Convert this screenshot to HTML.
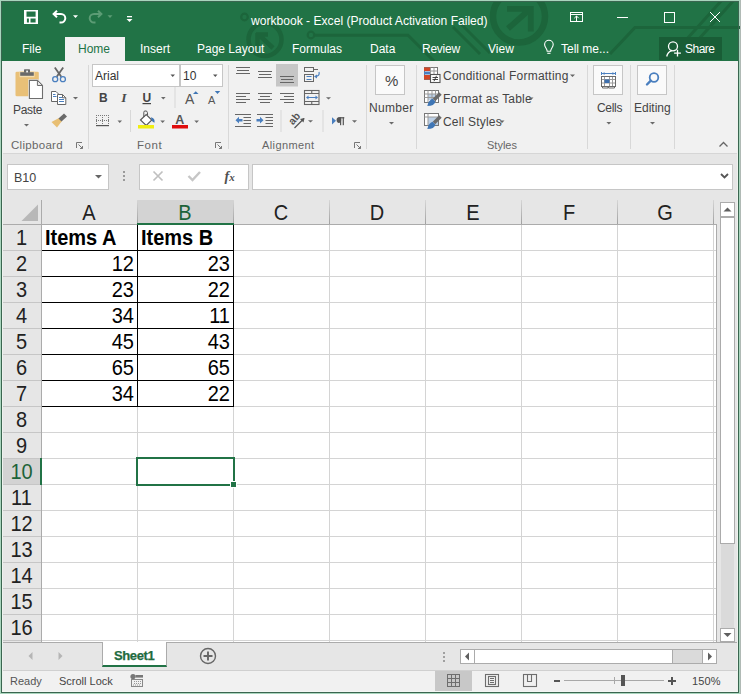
<!DOCTYPE html>
<html><head><meta charset="utf-8">
<style>
*{margin:0;padding:0;box-sizing:border-box}
html,body{width:741px;height:694px;overflow:hidden;background:#a9d5bd;font-family:"Liberation Sans",sans-serif}
.a{position:absolute}
.t{position:absolute;white-space:nowrap;line-height:1}
#title{left:1px;top:1px;width:738px;height:60px;background:#217346}
.tab{color:#fff;font-size:12px;top:43px}
#ribbon{left:2px;top:61px;width:736px;height:93px;background:#f1f1f1;border-bottom:1px solid #d6d6d6}
.sep{position:absolute;top:65px;width:1px;height:84px;background:#d8d8d8}
.glab{color:#666;font-size:11px;top:140px}
.rt{color:#444;font-size:12px}
#grid{left:2px;top:198px}
.ch{position:absolute;top:200px;height:24px;font-size:18px;color:#222;text-align:center;line-height:26px}
.rh{position:absolute;left:2px;width:39px;height:26px;font-size:18px;color:#222;text-align:center;line-height:28px}
.cell{position:absolute;font-size:18px;color:#000;line-height:28px;height:26px}
.big{transform:scaleY(1.07);transform-origin:0 17px}
</style></head><body>
<!-- title bar -->
<div class="a" id="title"></div>
<svg class="a" style="left:0;top:1px" width="740" height="60">
  <g transform="translate(0,-1)" stroke="#1c653b" fill="none" stroke-width="3">
    <circle cx="244.5" cy="17" r="3.3" stroke-width="2.2"/>
    <circle cx="265" cy="39.5" r="16.5" stroke-width="4.5"/>
    <path d="M273 48 L258 34 M256 34.5 H268 M257.5 33 V46" stroke-width="4.5"/>
    <circle cx="311" cy="35" r="3.3" stroke-width="2.2"/>
    <path d="M314.5 35.3 H408 L434 61" stroke-width="3"/>
    <path d="M453 27 L480 54 M461 24 L490 53" stroke-width="3"/>
    <circle cx="519" cy="16.5" r="26" stroke-width="6.5"/>
    <path d="M508 28.5 L529 10 M507 8.8 H530.8 V31.4" stroke-width="5.8"/>
    <path d="M610 54 L635 27.5 H741" stroke-width="3"/>
    <path d="M686 40 L722 0 M698 40 L734 0" stroke-width="3"/>
  </g>
</svg>
<div class="a" style="left:740px;top:0;width:1px;height:694px;background:#b0bab5"></div>
<!-- QAT -->
<svg class="a" style="left:0;top:0" width="140" height="33">
  <path fill="#fff" fill-rule="evenodd" d="M24 10 H38 V24 H24 Z M26.5 11.6 V16.7 H35.6 V11.6 Z M26.9 18.4 V22.6 H28.9 V18.4 Z M30.5 18.4 V22.6 H35.6 V18.4 Z"/>
  <g fill="none" stroke="#fff" stroke-width="2">
    <path d="M54 14 H61 A4.3 4.3 0 0 1 61 22.6 H59.5"/>
    <path d="M57 10.7 L53.6 14 L57 17.3"/>
  </g>
  <path d="M73 15.2 H78 L75.5 18 Z" fill="#fff"/>
  <g fill="none" stroke="#5c9c75" stroke-width="2">
    <path d="M101 14 H94 A4.3 4.3 0 0 0 94 22.6 H95.5"/>
    <path d="M98 10.7 L101.4 14 L98 17.3"/>
  </g>
  <path d="M107.5 15.2 H112.5 L110 18 Z" fill="#5c9c75"/>
  <rect x="127" y="16" width="5" height="1.3" fill="#fff"/>
  <path d="M126.5 19 H132.5 L129.5 22 Z" fill="#fff"/>
</svg>
<div class="t" style="left:251px;top:15px;font-size:12.1px;color:#fff">workbook - Excel (Product Activation Failed)</div>
<!-- window controls -->
<svg class="a" style="left:560px;top:0" width="181" height="33">
  <g fill="none" stroke="#fff" stroke-width="1">
    <rect x="10.5" y="12.5" width="12" height="9"/>
    <path d="M10.5 14.5 H22.5"/>
    <path d="M16.5 21.5 V16 M14.3 18.2 L16.5 16 L18.7 18.2"/>
    <path d="M57 17.5 H68"/>
    <rect x="104.5" y="12.5" width="10" height="10"/>
    <path d="M150 12 L160 22 M160 12 L150 22"/>
  </g>
</svg>
<!-- tabs -->
<div class="t tab" style="left:22px">File</div>
<div class="a" style="left:65px;top:37px;width:60px;height:24px;background:#f1f1f1"></div>
<div class="t tab" style="left:78px;color:#217346">Home</div>
<div class="t tab" style="left:140px">Insert</div>
<div class="t tab" style="left:197px">Page Layout</div>
<div class="t tab" style="left:292px">Formulas</div>
<div class="t tab" style="left:370px">Data</div>
<div class="t tab" style="left:422px;letter-spacing:-0.25px">Review</div>
<div class="t tab" style="left:488px">View</div>
<svg class="a" style="left:540px;top:38px" width="20" height="20">
  <g fill="none" stroke="#fff" stroke-width="1.1">
    <path d="M7.2 13.3 C7.2 10.6 4.6 9.4 4.6 6.6 A4.3 4.3 0 0 1 13.2 6.6 C13.2 9.4 10.6 10.6 10.6 13.3 Z"/>
    <path d="M7.3 15.3 H10.5"/>
  </g>
</svg>
<div class="t tab" style="left:561px">Tell me...</div>
<div class="a" style="left:659px;top:37px;width:63px;height:23px;background:#195d36"></div>
<svg class="a" style="left:664px;top:38px" width="20" height="22">
  <g fill="none" stroke="#fff" stroke-width="1.3">
    <circle cx="9" cy="8.3" r="4.5"/>
    <path d="M2.7 18.5 Q3.8 13.8 7.6 12.9"/>
    <path d="M13.5 11.8 V18.6 M10.1 15.2 H16.9"/>
  </g>
</svg>
<div class="t tab" style="left:685px;letter-spacing:-0.5px">Share</div>

<!-- window border -->
<div class="a" style="left:2px;top:61px;width:736px;height:631px;background:#e6e6e6"></div>

<!-- ribbon -->
<div class="a" id="ribbon"></div>
<div class="sep" style="left:88px"></div>
<div class="sep" style="left:228px"></div>
<div class="sep" style="left:366px"></div>
<div class="sep" style="left:416px"></div>
<div class="sep" style="left:587px"></div>
<div class="sep" style="left:630px"></div>
<div class="sep" style="left:674px"></div>
<div class="t glab" style="left:11px;font-size:11.5px;letter-spacing:0.3px">Clipboard</div>
<div class="t glab" style="left:137px;font-size:11.5px;letter-spacing:0.6px">Font</div>
<div class="t glab" style="left:262px;letter-spacing:0.4px">Alignment</div>
<div class="t glab" style="left:487px">Styles</div>

<div class="t rt" style="left:13px;top:104px;letter-spacing:-0.3px">Paste</div>
<div class="a" style="left:92px;top:64px;width:88px;height:23px;background:#fff;border:1px solid #c6c6c6"></div>
<div class="t" style="left:95px;top:70px;font-size:12px;color:#333">Arial</div>
<div class="a" style="left:180px;top:64px;width:43px;height:23px;background:#fff;border:1px solid #c6c6c6"></div>
<div class="t" style="left:183px;top:70px;font-size:12px;color:#333">10</div>
<div class="a" style="left:375px;top:65px;width:30px;height:30px;background:#fafafa;border:1px solid #c6c6c6"></div>
<div class="t" style="left:385px;top:73px;font-size:15px;color:#444">%</div>
<div class="t rt" style="left:369px;top:102px;letter-spacing:0.3px">Number</div>
<div class="t rt" style="left:443px;top:70px;letter-spacing:0.22px">Conditional Formatting</div>
<div class="t rt" style="left:443px;top:93px;letter-spacing:0.2px">Format as Table</div>
<div class="t rt" style="left:443px;top:116px;letter-spacing:0.2px">Cell Styles</div>
<div class="a" style="left:593px;top:65px;width:30px;height:30px;background:#fafafa;border:1px solid #c6c6c6"></div>
<div class="t rt" style="left:597px;top:102px;letter-spacing:-0.3px">Cells</div>
<div class="a" style="left:637px;top:65px;width:30px;height:30px;background:#fafafa;border:1px solid #c6c6c6"></div>
<div class="t rt" style="left:634px;top:102px">Editing</div>

<!-- formula bar -->
<div class="a" style="left:7px;top:164px;width:102px;height:26px;background:#fff;border:1px solid #c6c6c6"></div>
<div class="t" style="left:14px;top:172px;font-size:12.5px;color:#444">B10</div>
<div class="a" style="left:139px;top:164px;width:110px;height:26px;background:#fff;border:1px solid #c6c6c6"></div>
<div class="a" style="left:252px;top:164px;width:481px;height:26px;background:#fff;border:1px solid #c6c6c6"></div>

<!-- grid -->
<div class="a" style="left:2px;top:200px;width:714px;height:442px;background:#fff"></div>
<div class="a" style="left:2px;top:200px;width:714px;height:24px;background:#e6e6e6"></div>
<div class="a" style="left:2px;top:200px;width:39px;height:442px;background:#e6e6e6"></div>
<div class="a" style="left:137px;top:200px;width:96px;height:24px;background:#d3d3d3"></div>


<!-- vertical scrollbar -->
<div class="a" style="left:717px;top:198px;width:21px;height:444px;background:#e6e6e6"></div>
<div class="a" style="left:720px;top:202px;width:15px;height:15px;background:#fff;border:1px solid #ababab"></div>
<svg class="a" style="left:720px;top:202px" width="15" height="15"><path d="M3.5 9.5 H11.5 L7.5 5.5 Z" fill="#5f5f5f"/></svg>
<div class="a" style="left:720px;top:217px;width:15px;height:327px;background:#fff;border:1px solid #ababab"></div>
<div class="a" style="left:721px;top:544px;width:13px;height:84px;background:#dadada"></div>
<div class="a" style="left:720px;top:628px;width:15px;height:14px;background:#fff;border:1px solid #ababab"></div>
<svg class="a" style="left:720px;top:628px" width="15" height="14"><path d="M3.5 5 H11.5 L7.5 9 Z" fill="#5f5f5f"/></svg>
<!-- sheet tab bar -->
<div class="a" style="left:2px;top:642px;width:736px;height:29px;background:#e6e6e6;border-top:1px solid #ababab;border-bottom:1px solid #d0d0d0"></div>
<svg class="a" style="left:18px;top:648px" width="50" height="16"><path d="M14.5 4 V12 L10.5 8 Z M40.5 4 V12 L44.5 8 Z" fill="#b5b5b5"/></svg>
<div class="a" style="left:102px;top:642px;width:65px;height:25px;background:#fff;border-left:1px solid #ababab;border-right:1px solid #ababab;border-bottom:2px solid #217346"></div>
<div class="t" style="left:114px;top:649px;font-size:13px;font-weight:bold;color:#1f6b40;letter-spacing:-0.4px;-webkit-text-stroke:0.25px #1f6b40">Sheet1</div>
<svg class="a" style="left:198px;top:646px" width="20" height="20"><g fill="none" stroke="#666" stroke-width="1.4"><circle cx="10" cy="10" r="7.5"/><path d="M10 5.5 V14.5 M5.5 10 H14.5" stroke-width="1.9"/></g></svg>
<svg class="a" style="left:440px;top:650px" width="8" height="14"><g fill="#a0a0a0"><rect x="3" y="2" width="2" height="2"/><rect x="3" y="6" width="2" height="2"/><rect x="3" y="10" width="2" height="2"/></g></svg>
<div class="a" style="left:460px;top:649px;width:257px;height:15px;background:#dadada;border:1px solid #ababab"></div>
<div class="a" style="left:460px;top:649px;width:15px;height:15px;background:#fff;border:1px solid #ababab"></div>
<svg class="a" style="left:460px;top:649px" width="15" height="15"><path d="M5 7.5 L9 3.5 V11.5 Z" fill="#5f5f5f"/></svg>
<div class="a" style="left:474px;top:649px;width:199px;height:15px;background:#fff;border:1px solid #ababab"></div>
<div class="a" style="left:702px;top:649px;width:15px;height:15px;background:#fff;border:1px solid #ababab"></div>
<svg class="a" style="left:702px;top:649px" width="15" height="15"><path d="M10 7.5 L6 3.5 V11.5 Z" fill="#5f5f5f"/></svg>
<!-- status bar -->
<div class="a" style="left:2px;top:671px;width:736px;height:21px;background:#f1f1f1"></div>
<div class="t" style="left:10px;top:676px;font-size:11px;color:#555">Ready</div>
<div class="t" style="left:59px;top:676px;font-size:11px;color:#444">Scroll Lock</div>
<svg class="a" style="left:128px;top:672px" width="18" height="18">
 <circle cx="5" cy="4.5" r="2.6" fill="#777"/>
 <rect x="7.5" y="3" width="7.5" height="2.6" fill="#777"/>
 <g fill="#888"><rect x="3" y="7" width="12" height="1"/><rect x="3" y="14" width="12" height="1"/>
 <rect x="3" y="7" width="1" height="8"/><rect x="14" y="7" width="1" height="8"/></g>
 <g fill="#999"><rect x="6" y="9" width="1" height="1"/><rect x="8" y="9" width="1" height="1"/><rect x="10" y="9" width="1" height="1"/><rect x="12" y="9" width="1" height="1"/>
 <rect x="6" y="11" width="1" height="1"/><rect x="8" y="11" width="1" height="1"/><rect x="10" y="11" width="1" height="1"/><rect x="12" y="11" width="1" height="1"/>
 <rect x="5" y="12.5" width="1" height="1"/><rect x="7" y="12.5" width="1" height="1"/><rect x="9" y="12.5" width="1" height="1"/><rect x="11" y="12.5" width="1" height="1"/></g>
</svg>
<div class="a" style="left:435px;top:671px;width:37px;height:21px;background:#c8c8c8"></div>
<svg class="a" style="left:0;top:0" width="741" height="694">
 <g fill="none" stroke="#6e6e6e" stroke-width="1">
  <rect x="447.5" y="674.5" width="12" height="12"/>
  <path d="M451.5 674.5 V686.5 M455.5 674.5 V686.5 M447.5 678.5 H459.5 M447.5 682.5 H459.5"/>
 </g>
 <g fill="none" stroke="#6e6e6e" stroke-width="1.1">
  <rect x="485.5" y="674.5" width="13" height="12"/>
  <rect x="488.5" y="676.5" width="7" height="8"/>
  <path d="M490 678.5 H494 M490 680.5 H494 M490 682.5 H494"/>
  <rect x="523.5" y="674.5" width="13" height="12"/>
  <path d="M527.5 674.5 V681.5 H531.5 V674.5"/>
 </g>
</svg>
<div class="a" style="left:554px;top:680px;width:6px;height:2px;background:#555"></div>
<div class="a" style="left:564px;top:680px;width:100px;height:1px;background:#a8a8a8"></div>
<div class="a" style="left:614px;top:677px;width:1px;height:7px;background:#a8a8a8"></div>
<div class="a" style="left:621px;top:675px;width:4px;height:11px;background:#555"></div>
<svg class="a" style="left:666px;top:675px" width="12" height="12"><path d="M6 2 V10 M2 6 H10" stroke="#555" stroke-width="2"/></svg>
<div class="t" style="left:692px;top:676px;font-size:11px;color:#444;letter-spacing:0.1px">150%</div>

<!--RIBBONSVG-->
<svg class="a" style="left:0;top:0" width="741" height="200">
 <!-- paste -->
 <path d="M15.5 73 Q15.5 71.7 16.8 71.7 H37.5 Q38.8 71.7 38.8 73 V95 Q38.8 96.3 37.5 96.3 H16.8 Q15.5 96.3 15.5 95 Z" fill="#e9c077"/>
 <rect x="19.5" y="71.2" width="15" height="6" fill="#f5deb0"/>
 <path d="M20.2 72.2 H33.8 V75.8 H20.2 Z" fill="#6a6a6a"/>
 <path d="M24 72.5 V69.8 Q24 69.2 24.6 69.2 H29.4 Q30 69.2 30 69.8 V72.5 Z" fill="#6a6a6a"/>
 <rect x="26.2" y="70.6" width="1.8" height="1.8" fill="#f1f1f1"/>
 <path d="M28.3 79.3 H38 L43.6 84.9 V99.4 H28.3 Z" fill="#f4f4f4"/>
 <path d="M29.4 80.4 H37.4 L42.5 85.5 V98.5 H29.4 Z" fill="#fff" stroke="#6e6e6e" stroke-width="1.1"/>
 <path d="M37.4 80.4 V85.5 H42.5 Z" fill="#e6e6e6" stroke="#6e6e6e" stroke-width="1"/>
 <path d="M24 124 H29 L26.5 126.5 Z" fill="#6a6a6a"/>
 <!-- scissors -->
 <path d="M54.8 67.5 L61.3 76.8 M63.2 67.5 L56.7 76.8" stroke="#666" stroke-width="1.8" fill="none"/>
 <g fill="none" stroke="#4a7fbf" stroke-width="1.3">
  <circle cx="55.2" cy="79.2" r="2.5"/>
  <circle cx="62.9" cy="79.2" r="2.5"/>
 </g>
 <!-- copy -->
 <path d="M51.5 91.5 H56 L58.5 94 V101.5 H51.5 Z" fill="#fff" stroke="#666" stroke-width="1"/>
 <path d="M57.5 94.5 H62.5 L65.8 97.8 V104.5 H57.5 Z" fill="#fff" stroke="#666" stroke-width="1"/>
 <path d="M62.5 94.5 V97.8 H65.8" fill="none" stroke="#666" stroke-width="1"/>
 <g stroke="#4a7fbf" stroke-width="1"><path d="M53 94.5 H55.5 M53 96.5 H56.5 M59 97.5 H62 M59 99.5 H64 M59 101.5 H64"/></g>
 <path d="M73 97 H78 L75.5 99.5 Z" fill="#6a6a6a"/>
 <!-- format painter -->
 <path d="M59 118 L62 121 L57 127.5 L51.5 122 Z" fill="#e8bf74"/>
 <path d="M58.5 118.5 L64 113.5 L67 116.5 L61.5 121.5 Z" fill="#6a6a6a"/>
 <!-- font group -->
 <path d="M170.5 74.5 H175 L172.75 77 Z M213 74.5 H217.5 L215.25 77 Z" fill="#555"/>
 <text x="99" y="102" font-family="Liberation Sans" font-weight="bold" font-size="12" fill="#444">B</text>
 <text x="121.3" y="102.3" font-family="Liberation Serif" font-style="italic" font-weight="bold" font-size="13.5" fill="#4a4a4a">I</text>
 <text x="142.5" y="102" font-family="Liberation Sans" font-weight="bold" font-size="12" fill="#444">U</text>
 <rect x="142.5" y="103" width="8.5" height="1.2" fill="#444"/>
 <path d="M161 97 H165.6 L163.3 99.4 Z" fill="#6a6a6a"/>
 <rect x="174.5" y="87" width="1" height="21" fill="#d8d8d8"/>
 <text x="185" y="104" font-family="Liberation Sans" font-size="14" fill="#555">A</text>
 <path d="M193 94 H198.5 L195.75 91.2 Z" fill="#3f76b5"/>
 <text x="208" y="104" font-family="Liberation Sans" font-size="11" fill="#555">A</text>
 <path d="M214.8 91 H220.2 L217.5 94 Z" fill="#3f76b5"/>
 <!-- borders -->
 <g fill="none" stroke="#7a7a7a" stroke-width="1" stroke-dasharray="1 1">
  <path d="M96 115.5 H109 M96 120.5 H109"/>
  <path d="M96.5 115 V125 M102.5 115 V125 M108.5 115 V125"/>
 </g>
 <rect x="96" y="125" width="13" height="1.2" fill="#555"/>
 <path d="M117.5 120.6 H122 L119.75 123 Z" fill="#6a6a6a"/>
 <rect x="130" y="110" width="1" height="22" fill="#d8d8d8"/>
 <!-- fill color -->
 <path d="M140.5 120 L146.2 114.5 L151.8 120 L146.2 125.5 Z" fill="#fff" stroke="#555" stroke-width="1.1"/>
 <path d="M143.8 117 V112.3 Q143.8 111 145 111 H146 Q147.2 111 147.4 112.5 L147.6 115" fill="none" stroke="#555" stroke-width="1"/>
 <path d="M151 117.2 Q155.2 118 154.5 122.8 Q151.2 121.8 151 117.2 Z" fill="#3f76b5"/>
 <rect x="138" y="125" width="16" height="3.5" fill="#f0ee10"/>
  <path d="M160.3 120.6 H165 L162.65 123 Z" fill="#6a6a6a"/>
 <!-- font color -->
 <text x="175.3" y="124.3" font-family="Liberation Sans" font-weight="bold" font-size="12.5" fill="#555">A</text>
 <rect x="172" y="125" width="16" height="3.5" fill="#e00d0d"/>
 <path d="M194.3 120.6 H199 L196.65 123 Z" fill="#6a6a6a"/>
 <!-- launchers -->
 <g fill="none" stroke="#777" stroke-width="1">
  <path d="M76.5 148 V142.5 H82" /><path d="M78.5 144.5 L82.5 148.5 M80 148.5 H82.5 V146"/>
  <path d="M215.5 148 V142.5 H221" /><path d="M217.5 144.5 L221.5 148.5 M219 148.5 H221.5 V146"/>
  <path d="M354.5 148 V142.5 H360" /><path d="M356.5 144.5 L360.5 148.5 M358 148.5 H360.5 V146"/>
 </g>
 <!-- alignment -->
 <g stroke="#666" stroke-width="1.1" fill="none">
  <path d="M236 67.5 H250 M237 70.5 H249 M236 73.5 H250"/>
  <path d="M258 71.5 H272 M259 74.5 H271 M258 77.5 H272"/>
 </g>
 <rect x="276" y="64" width="22" height="22.5" fill="#c6c6c6"/>
 <g stroke="#666" stroke-width="1.1" fill="none">
  <path d="M280 76.5 H294 M281 79.5 H293 M280 82.5 H294"/>
  <path d="M236 93.5 H250 M236 96.5 H246 M236 99.5 H250 M236 102.5 H246"/>
  <path d="M258 93.5 H272 M260 96.5 H270 M258 99.5 H272 M260 102.5 H270"/>
  <path d="M280 93.5 H294 M284 96.5 H294 M280 99.5 H294 M284 102.5 H294"/>
  <path d="M235 114.5 H251 M243.5 117.5 H251 M243.5 120.5 H251 M243.5 123.5 H251 M235 126.5 H251"/>
  <path d="M257 114.5 H273 M265.5 117.5 H273 M265.5 120.5 H273 M265.5 123.5 H273 M257 126.5 H273"/>
 </g>
 <path d="M235.5 120.2 L239 116.8 V118.9 H242.5 V121.5 H239 V123.6 Z" fill="#4a7fbf"/>
 <path d="M263.5 120.2 L260 116.8 V118.9 H256.5 V121.5 H260 V123.6 Z" fill="#4a7fbf"/>
 <!-- wrap text -->
 <g fill="none" stroke="#666" stroke-width="1">
  <rect x="304.5" y="67.5" width="9" height="4"/>
  <path d="M313.5 69.5 H318"/>
  <rect x="304.5" y="74.5" width="9" height="7"/>
 </g>
 <path d="M306.5 76.5 H311.5 M306.5 79.5 H311.5" stroke="#4a7fbf" stroke-width="1"/>
 <path d="M319 72 Q320 76 315.5 76.5" fill="none" stroke="#4a7fbf" stroke-width="1.2"/>
 <path d="M314 76.5 L317 74.5 V78.5 Z" fill="#4a7fbf"/>
 <!-- merge -->
 <g fill="none" stroke="#666" stroke-width="1.1">
  <rect x="304.5" y="90.5" width="14.5" height="14"/>
  <path d="M304.5 93.5 H319 M304.5 101.5 H319 M311.75 90.5 V93.5 M311.75 101.5 V104.5"/>
 </g>
 <path d="M307 97.5 H317" stroke="#4a7fbf" stroke-width="1"/>
 <path d="M306 97.5 L308.5 95.5 V99.5 Z M318 97.5 L315.5 95.5 V99.5 Z" fill="#4a7fbf"/>
 <path d="M326 97.2 H331 L328.5 99.6 Z" fill="#6a6a6a"/>
 <rect x="280.5" y="110" width="1" height="22" fill="#d8d8d8"/>
 <rect x="322.5" y="110" width="1" height="22" fill="#d8d8d8"/>
 <!-- orientation -->
 <text x="0" y="0" font-family="Liberation Sans" font-weight="bold" font-size="10.5" fill="#555" transform="translate(293 125.5) rotate(-50)">ab</text>
 <path d="M294.5 128 L304 118.5" stroke="#555" stroke-width="1.2"/>
 <path d="M304.5 118 L300 119 L303.5 122.5 Z" fill="#555"/>
 <path d="M308 120.3 H313 L310.5 122.6 Z" fill="#6a6a6a"/>
 <!-- rtl -->
 <path d="M332 117.2 L336 120.8 L332 124.4 Z" fill="#4a7fbf"/>
 <g fill="#555"><ellipse cx="338.9" cy="120.1" rx="2.3" ry="2.8"/><rect x="338.5" y="117.2" width="5.8" height="1.2"/><rect x="340" y="117.2" width="1.2" height="8"/><rect x="342.7" y="117.2" width="1.2" height="8"/></g>
 <path d="M352 120.3 H357 L354.5 122.7 Z" fill="#6a6a6a"/>
 <!-- number -->
 <path d="M389 122 H394 L391.5 124.6 Z" fill="#6a6a6a"/>
 <!-- cond fmt -->
 <g>
  <rect x="424.5" y="67.5" width="13" height="12" fill="#fff" stroke="#777" stroke-width="1"/>
  <rect x="424" y="67.5" width="6.5" height="3.5" fill="#d24726"/>
  <rect x="424" y="71.5" width="6.5" height="3" fill="#4a7fbf"/>
  <rect x="424" y="75" width="6.5" height="4.5" fill="#d24726"/>
  <path d="M430.5 67.5 V74 M434 67.5 V74 M430.5 71 H437.5" stroke="#999" stroke-width="1"/>
  <rect x="430.5" y="74.5" width="9.5" height="8" fill="#fff" stroke="#555" stroke-width="1.1"/>
  <path d="M432.5 77.5 H438 M432.5 79.5 H438 M436.5 75.8 L434 81.2" stroke="#333" stroke-width="0.9"/>
 </g>
 <g>
  <rect x="424.5" y="90.5" width="14" height="12" fill="#fff" stroke="#777" stroke-width="1"/>
  <rect x="428" y="94" width="8" height="6" fill="#bcd0e6"/>
  <path d="M424.5 94 H438.5 M424.5 97.5 H438.5 M428 90.5 V102.5 M432 90.5 V102.5 M435.5 90.5 V102.5" stroke="#999" stroke-width="1"/>
  <path d="M439.2 92.3 L441.7 94.8 L435.2 101.3 L432.7 98.8 Z" fill="#6a6a6a"/>
  <path d="M432.5 98.8 L435.3 101.5 Q434.5 106 427.3 106 Q428.5 100 432.5 98.8 Z" fill="#3f76b5"/>
 </g>
 <g>
  <rect x="424.5" y="113.5" width="14" height="12" fill="#fff" stroke="#777" stroke-width="1"/>
  <rect x="428" y="117" width="10" height="8" fill="#bcd0e6"/>
  <path d="M424.5 117 H438.5 M428 113.5 V125.5" stroke="#999" stroke-width="1"/>
  <path d="M439.2 115.3 L441.7 117.8 L435.2 124.3 L432.7 121.8 Z" fill="#6a6a6a"/>
  <path d="M432.5 121.8 L435.3 124.5 Q434.5 129 427.3 129 Q428.5 123 432.5 121.8 Z" fill="#3f76b5"/>
 </g>
 <path d="M570 74.5 H575 L572.5 77 Z M528.5 97.5 H533.5 L531 100 Z M499.5 120.5 H504.5 L502 123 Z" fill="#666"/>
 <!-- cells icon -->
 <rect x="601.5" y="76.5" width="14" height="10" fill="#fff" stroke="#6a6a6a" stroke-width="1"/>
 <g fill="none" stroke="#9a9a9a" stroke-width="1">
  <path d="M602 79.5 H615 M602 83 H615 M604.5 77 V86 M609.5 77 V86 M612.5 77 V86"/>
 </g>
 <path d="M602.5 86.5 V88 H608 V86.5 M608.5 86.5 V88 H614.5 V86.5" fill="none" stroke="#6a6a6a" stroke-width="1"/>
 <rect x="604.5" y="79.5" width="5" height="3.5" fill="#3d6fae"/>
 <path d="M602 73.5 H615 M601.5 72 V75 M615.5 72 V75" stroke="#4a7fbf" stroke-width="1"/>
 <path d="M602.5 73.5 L604.5 72 V75 Z M614.5 73.5 L612.5 72 V75 Z" fill="#4a7fbf"/>
 <path d="M606.4 122 H611.3 L608.85 124.6 Z" fill="#6a6a6a"/>
 <!-- editing -->
 <circle cx="654" cy="77.5" r="4.3" fill="none" stroke="#4a7fbf" stroke-width="1.8"/>
 <path d="M650.8 80.7 L647 84.5" stroke="#4a7fbf" stroke-width="2.4" stroke-linecap="round"/>
 <path d="M650 122 H655 L652.5 124.6 Z" fill="#6a6a6a"/>
 <!-- collapse -->
 <path d="M719.5 146.5 L723.5 142.5 L727.5 146.5" fill="none" stroke="#666" stroke-width="1.3"/>
 <!-- name box arrow / formula -->
 <path d="M95 175 H102 L98.5 178.5 Z" fill="#666"/>
 <g fill="#9a9a9a"><rect x="123" y="171" width="2" height="2"/><rect x="123" y="175" width="2" height="2"/><rect x="123" y="179" width="2" height="2"/></g>
 <path d="M153.5 171.5 L162.5 180.5 M162.5 171.5 L153.5 180.5" stroke="#c0c0c0" stroke-width="1.7"/>
 <path d="M188.5 176 L192.5 180 L200 172" fill="none" stroke="#c6c6c6" stroke-width="2.4"/>
 <text x="224.5" y="181" font-family="Liberation Serif" font-style="italic" font-weight="bold" font-size="14" fill="#505050">f</text>
 <text x="229.3" y="180.5" font-family="Liberation Serif" font-style="italic" font-weight="bold" font-size="11" fill="#505050">x</text>
 <path d="M721 174 L724.5 177.5 L728 174" fill="none" stroke="#555" stroke-width="1.8"/>
</svg>
<!--/RIBBONSVG-->

<!--GRID-->
<div class="a" style="left:137px;top:225px;width:1px;height:417px;background:#d4d4d4"></div>
<div class="a" style="left:137px;top:200px;width:1px;height:24px;background:linear-gradient(#d6d6d6,#a0a0a0)"></div>
<div class="a" style="left:233px;top:225px;width:1px;height:417px;background:#d4d4d4"></div>
<div class="a" style="left:233px;top:200px;width:1px;height:24px;background:linear-gradient(#d6d6d6,#a0a0a0)"></div>
<div class="a" style="left:329px;top:225px;width:1px;height:417px;background:#d4d4d4"></div>
<div class="a" style="left:329px;top:200px;width:1px;height:24px;background:linear-gradient(#d6d6d6,#a0a0a0)"></div>
<div class="a" style="left:425px;top:225px;width:1px;height:417px;background:#d4d4d4"></div>
<div class="a" style="left:425px;top:200px;width:1px;height:24px;background:linear-gradient(#d6d6d6,#a0a0a0)"></div>
<div class="a" style="left:521px;top:225px;width:1px;height:417px;background:#d4d4d4"></div>
<div class="a" style="left:521px;top:200px;width:1px;height:24px;background:linear-gradient(#d6d6d6,#a0a0a0)"></div>
<div class="a" style="left:617px;top:225px;width:1px;height:417px;background:#d4d4d4"></div>
<div class="a" style="left:617px;top:200px;width:1px;height:24px;background:linear-gradient(#d6d6d6,#a0a0a0)"></div>
<div class="a" style="left:713px;top:225px;width:1px;height:417px;background:#d4d4d4"></div>
<div class="a" style="left:713px;top:200px;width:1px;height:24px;background:linear-gradient(#d6d6d6,#a0a0a0)"></div>
<div class="a" style="left:42px;top:250px;width:674px;height:1px;background:#d4d4d4"></div>
<div class="a" style="left:2px;top:250px;width:39px;height:1px;background:#c6c6c6"></div>
<div class="a" style="left:42px;top:276px;width:674px;height:1px;background:#d4d4d4"></div>
<div class="a" style="left:2px;top:276px;width:39px;height:1px;background:#c6c6c6"></div>
<div class="a" style="left:42px;top:302px;width:674px;height:1px;background:#d4d4d4"></div>
<div class="a" style="left:2px;top:302px;width:39px;height:1px;background:#c6c6c6"></div>
<div class="a" style="left:42px;top:328px;width:674px;height:1px;background:#d4d4d4"></div>
<div class="a" style="left:2px;top:328px;width:39px;height:1px;background:#c6c6c6"></div>
<div class="a" style="left:42px;top:354px;width:674px;height:1px;background:#d4d4d4"></div>
<div class="a" style="left:2px;top:354px;width:39px;height:1px;background:#c6c6c6"></div>
<div class="a" style="left:42px;top:380px;width:674px;height:1px;background:#d4d4d4"></div>
<div class="a" style="left:2px;top:380px;width:39px;height:1px;background:#c6c6c6"></div>
<div class="a" style="left:42px;top:406px;width:674px;height:1px;background:#d4d4d4"></div>
<div class="a" style="left:2px;top:406px;width:39px;height:1px;background:#c6c6c6"></div>
<div class="a" style="left:42px;top:432px;width:674px;height:1px;background:#d4d4d4"></div>
<div class="a" style="left:2px;top:432px;width:39px;height:1px;background:#c6c6c6"></div>
<div class="a" style="left:42px;top:458px;width:674px;height:1px;background:#d4d4d4"></div>
<div class="a" style="left:2px;top:458px;width:39px;height:1px;background:#c6c6c6"></div>
<div class="a" style="left:42px;top:484px;width:674px;height:1px;background:#d4d4d4"></div>
<div class="a" style="left:2px;top:484px;width:39px;height:1px;background:#c6c6c6"></div>
<div class="a" style="left:42px;top:510px;width:674px;height:1px;background:#d4d4d4"></div>
<div class="a" style="left:2px;top:510px;width:39px;height:1px;background:#c6c6c6"></div>
<div class="a" style="left:42px;top:536px;width:674px;height:1px;background:#d4d4d4"></div>
<div class="a" style="left:2px;top:536px;width:39px;height:1px;background:#c6c6c6"></div>
<div class="a" style="left:42px;top:562px;width:674px;height:1px;background:#d4d4d4"></div>
<div class="a" style="left:2px;top:562px;width:39px;height:1px;background:#c6c6c6"></div>
<div class="a" style="left:42px;top:588px;width:674px;height:1px;background:#d4d4d4"></div>
<div class="a" style="left:2px;top:588px;width:39px;height:1px;background:#c6c6c6"></div>
<div class="a" style="left:42px;top:614px;width:674px;height:1px;background:#d4d4d4"></div>
<div class="a" style="left:2px;top:614px;width:39px;height:1px;background:#c6c6c6"></div>
<div class="a" style="left:42px;top:640px;width:674px;height:1px;background:#d4d4d4"></div>
<div class="a" style="left:2px;top:640px;width:39px;height:1px;background:#c6c6c6"></div>
<div class="a" style="left:2px;top:224px;width:714px;height:1px;background:#ababab"></div>
<div class="a" style="left:41px;top:200px;width:1px;height:442px;background:#ababab"></div>
<div class="a" style="left:137px;top:223px;width:97px;height:2px;background:#217346"></div>
<div class="a" style="left:2px;top:459px;width:39px;height:25px;background:#d3d3d3"></div>
<div class="a" style="left:40px;top:458px;width:2px;height:27px;background:#217346"></div>
<svg class="a" style="left:0;top:200px" width="41" height="24"><path d="M38 4.5 L38 21 L21.5 21 Z" fill="#b8b8b8"/></svg>
<div class="t big" style="left:41px;width:96px;text-align:center;top:203px;font-size:20px;color:#222">A</div>
<div class="t big" style="left:137px;width:96px;text-align:center;top:203px;font-size:20px;color:#1d6339">B</div>
<div class="t big" style="left:233px;width:96px;text-align:center;top:203px;font-size:20px;color:#222">C</div>
<div class="t big" style="left:329px;width:96px;text-align:center;top:203px;font-size:20px;color:#222">D</div>
<div class="t big" style="left:425px;width:96px;text-align:center;top:203px;font-size:20px;color:#222">E</div>
<div class="t big" style="left:521px;width:96px;text-align:center;top:203px;font-size:20px;color:#222">F</div>
<div class="t big" style="left:617px;width:96px;text-align:center;top:203px;font-size:20px;color:#222">G</div>
<div class="t big" style="left:2px;width:39px;text-align:center;top:228px;font-size:20px;color:#222">1</div>
<div class="t big" style="left:2px;width:39px;text-align:center;top:254px;font-size:20px;color:#222">2</div>
<div class="t big" style="left:2px;width:39px;text-align:center;top:280px;font-size:20px;color:#222">3</div>
<div class="t big" style="left:2px;width:39px;text-align:center;top:306px;font-size:20px;color:#222">4</div>
<div class="t big" style="left:2px;width:39px;text-align:center;top:332px;font-size:20px;color:#222">5</div>
<div class="t big" style="left:2px;width:39px;text-align:center;top:358px;font-size:20px;color:#222">6</div>
<div class="t big" style="left:2px;width:39px;text-align:center;top:384px;font-size:20px;color:#222">7</div>
<div class="t big" style="left:2px;width:39px;text-align:center;top:410px;font-size:20px;color:#222">8</div>
<div class="t big" style="left:2px;width:39px;text-align:center;top:436px;font-size:20px;color:#222">9</div>
<div class="t big" style="left:2px;width:39px;text-align:center;top:462px;font-size:20px;color:#1d6339">10</div>
<div class="t big" style="left:2px;width:39px;text-align:center;top:488px;font-size:20px;color:#222">11</div>
<div class="t big" style="left:2px;width:39px;text-align:center;top:514px;font-size:20px;color:#222">12</div>
<div class="t big" style="left:2px;width:39px;text-align:center;top:540px;font-size:20px;color:#222">13</div>
<div class="t big" style="left:2px;width:39px;text-align:center;top:566px;font-size:20px;color:#222">14</div>
<div class="t big" style="left:2px;width:39px;text-align:center;top:592px;font-size:20px;color:#222">15</div>
<div class="t big" style="left:2px;width:39px;text-align:center;top:618px;font-size:20px;color:#222">16</div>
<div class="t big" style="left:45px;top:228px;font-size:20px;font-weight:bold;color:#000">Items A</div>
<div class="t big" style="left:141px;top:228px;font-size:20px;font-weight:bold;color:#000">Items B</div>
<div class="t big" style="left:41px;width:93px;text-align:right;top:254px;font-size:20px;color:#000">12</div>
<div class="t big" style="left:137px;width:93px;text-align:right;top:254px;font-size:20px;color:#000">23</div>
<div class="t big" style="left:41px;width:93px;text-align:right;top:280px;font-size:20px;color:#000">23</div>
<div class="t big" style="left:137px;width:93px;text-align:right;top:280px;font-size:20px;color:#000">22</div>
<div class="t big" style="left:41px;width:93px;text-align:right;top:306px;font-size:20px;color:#000">34</div>
<div class="t big" style="left:137px;width:93px;text-align:right;top:306px;font-size:20px;color:#000">11</div>
<div class="t big" style="left:41px;width:93px;text-align:right;top:332px;font-size:20px;color:#000">45</div>
<div class="t big" style="left:137px;width:93px;text-align:right;top:332px;font-size:20px;color:#000">43</div>
<div class="t big" style="left:41px;width:93px;text-align:right;top:358px;font-size:20px;color:#000">65</div>
<div class="t big" style="left:137px;width:93px;text-align:right;top:358px;font-size:20px;color:#000">65</div>
<div class="t big" style="left:41px;width:93px;text-align:right;top:384px;font-size:20px;color:#000">34</div>
<div class="t big" style="left:137px;width:93px;text-align:right;top:384px;font-size:20px;color:#000">22</div>
<div class="a" style="left:42px;top:250px;width:192px;height:1px;background:#000"></div>
<div class="a" style="left:42px;top:276px;width:192px;height:1px;background:#000"></div>
<div class="a" style="left:42px;top:302px;width:192px;height:1px;background:#000"></div>
<div class="a" style="left:42px;top:328px;width:192px;height:1px;background:#000"></div>
<div class="a" style="left:42px;top:354px;width:192px;height:1px;background:#000"></div>
<div class="a" style="left:42px;top:380px;width:192px;height:1px;background:#000"></div>
<div class="a" style="left:42px;top:406px;width:192px;height:1px;background:#000"></div>
<div class="a" style="left:137px;top:225px;width:1px;height:182px;background:#000"></div>
<div class="a" style="left:233px;top:225px;width:1px;height:182px;background:#000"></div>
<div class="a" style="left:136px;top:457px;width:99px;height:29px;border:2px solid #217346"></div>
<div class="a" style="left:230px;top:481px;width:7px;height:7px;background:#fff"></div>
<div class="a" style="left:231px;top:482px;width:5px;height:5px;background:#217346"></div>
<div class="a" style="left:716px;top:224px;width:1px;height:418px;background:#ababab"></div>
<!--/GRID-->
<div class="a" style="left:2px;top:61px;width:1px;height:631px;background:#eef2ee"></div>
<div class="a" style="left:737px;top:61px;width:1px;height:631px;background:#eef2ee"></div>
<div class="a" style="left:2px;top:691px;width:736px;height:1px;background:#f4f8f4"></div>
<div class="a" style="left:1px;top:1px;width:738px;height:692px;border:1px solid #3a6650"></div>
</body></html>
